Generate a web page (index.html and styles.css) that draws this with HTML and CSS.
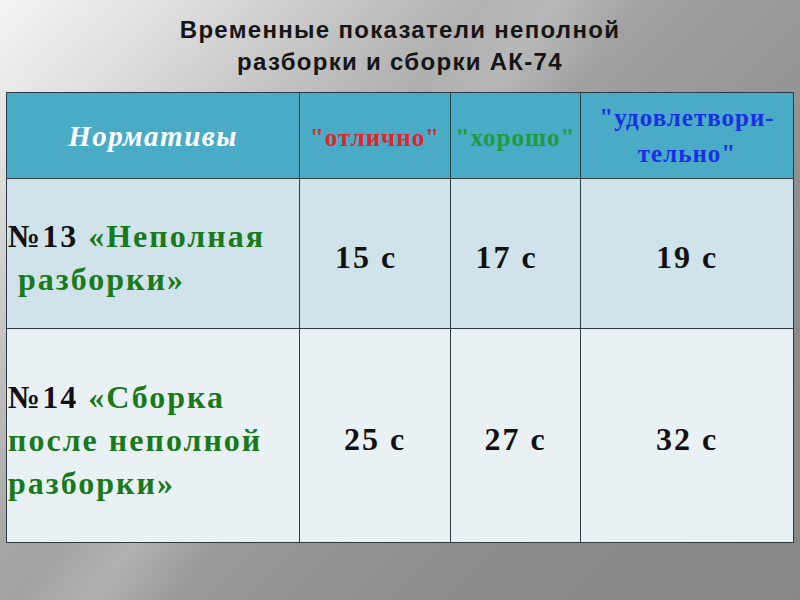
FILE: index.html
```html
<!DOCTYPE html>
<html lang="ru">
<head>
<meta charset="utf-8">
<title>Временные показатели</title>
<link rel="stylesheet" href="styles.css">
</head>
<body>
<div class="slide">
  <h1 class="title">Временные показатели неполной<br>разборки и сборки АК-74</h1>
  <table class="norms">
    <colgroup>
      <col class="c1"><col class="c2"><col class="c3"><col class="c4">
    </colgroup>
    <tr class="head">
      <th class="h-name">Нормативы</th>
      <th class="h-red">"отлично"</th>
      <th class="h-green">"хорошо"</th>
      <th class="h-blue">"удовлетвори-<br>тельно"</th>
    </tr>
    <tr class="row1">
      <td class="name"><span class="num">№13</span> «Неполная<br>&nbsp;разборки»</td>
      <td class="val shift">15 с</td>
      <td class="val shift">17 с</td>
      <td class="val">19 с</td>
    </tr>
    <tr class="row2">
      <td class="name"><span class="num">№14</span> «Сборка<br>после неполной<br>разборки»</td>
      <td class="val">25 с</td>
      <td class="val">27 с</td>
      <td class="val">32 с</td>
    </tr>
  </table>
</div>
</body>
</html>
```

FILE: styles.css
```css
html, body {
  margin: 0;
  padding: 0;
}
body {
  width: 800px;
  height: 600px;
  overflow: hidden;
}
.slide {
  width: 800px;
  height: 600px;
  box-sizing: border-box;
  padding: 14px 0 0 6px;
  background:
    linear-gradient(128deg, rgba(255,255,255,0) 0%, rgba(255,255,255,0) 38%, rgba(255,255,255,0.2) 44%, rgba(255,255,255,0) 51%),
    linear-gradient(136deg, #f4f4f4 0%, #dedede 13%, #c2c2c2 26%, #a6a6a6 40%, #9a9a9a 54%, #8c8c8c 75%, #878787 100%);
  background-color: #8c8c8c;
}
.title {
  margin: 0 0 0 -6px;
  width: 800px;
  text-align: center;
  font-family: "Liberation Sans", Arial, sans-serif;
  font-weight: bold;
  font-size: 24px;
  letter-spacing: 1.3px;
  line-height: 32px;
  color: #151515;
  height: 78px;
}
.norms {
  border-collapse: collapse;
  width: 787px;
  table-layout: fixed;
  font-family: "Liberation Serif", "Times New Roman", serif;
  font-weight: bold;
}
.c1 { width: 293px; }
.c2 { width: 151px; }
.c3 { width: 130px; }
.c4 { width: 213px; }
.norms th, .norms td {
  border: 1.5px solid #2e3a40;
  padding: 0;
}
.norms .head th {
  background: #4aabc6;
  height: 81px;
  text-align: center;
  vertical-align: middle;
}
.norms .h-name {
  color: #fff;
  font-style: italic;
  font-size: 29px;
  letter-spacing: 1.5px;
  padding-top: 2px;
}
.norms .h-red, .norms .h-green, .norms .h-blue {
  font-size: 25px;
  letter-spacing: 1px;
  line-height: 36px;
}
.norms .h-red, .norms .h-green { padding-top: 4px; }
.h-red { color: #e0242b; }
.h-green { color: #1e9b3c; }
.h-blue { color: #1a2fe4; }
.norms .row1 td {
  background: #d0e3eb;
  height: 140px;
}
.norms .row2 td {
  background: #e9f1f5;
  height: 204px;
}
.norms .name {
  color: #197a1c;
  font-size: 32px;
  letter-spacing: 2px;
  line-height: 43px;
  text-align: left;
  vertical-align: middle;
  padding-left: 1px;
  padding-top: 9px;
}
.num { color: #111; }
.norms .val {
  color: #111;
  font-size: 32px;
  letter-spacing: 2px;
  text-align: center;
  vertical-align: middle;
  padding-top: 8px;
}
.norms .val.shift {
  padding-right: 18px;
}
```
